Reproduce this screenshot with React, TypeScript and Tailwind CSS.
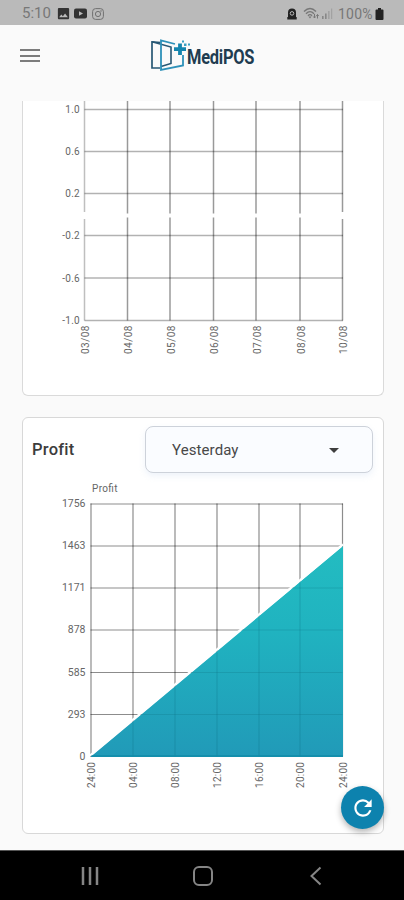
import React from 'react';
import { MdArrowDropDown, MdImage, MdRefresh } from 'react-icons/md';

const SALES_COLS = [
  { x: 62, label: '03/08' },
  { x: 105, label: '04/08' },
  { x: 147.5, label: '05/08' },
  { x: 191, label: '06/08' },
  { x: 233.5, label: '07/08' },
  { x: 277.5, label: '08/08' },
  { x: 320, label: '10/08' },
];

const SALES_ROWS = [
  { y: 8.5, label: '1.0' },
  { y: 50.5, label: '0.6' },
  { y: 92.5, label: '0.2' },
  { y: 134.5, label: '-0.2' },
  { y: 177, label: '-0.6' },
  { y: 219.5, label: '-1.0' },
];

const PROFIT_COLS = [
  { x: 68.5, label: '24:00' },
  { x: 110.5, label: '04:00' },
  { x: 152.5, label: '08:00' },
  { x: 194.5, label: '12:00' },
  { x: 236.5, label: '16:00' },
  { x: 277.5, label: '20:00' },
  { x: 320, label: '24:00' },
];

const PROFIT_ROWS = [
  { y: 24.5, label: '1756' },
  { y: 66.5, label: '1463' },
  { y: 108.5, label: '1171' },
  { y: 150.5, label: '878' },
  { y: 193, label: '585' },
  { y: 235, label: '293' },
  { y: 277, label: '0' },
];

export default function App() {
  return (
    <div className="relative flex h-[900px] w-[404px] flex-col overflow-hidden bg-[#fafafa] font-['Roboto',sans-serif]">
      <StatusBar />

      <header className="flex h-[76px] shrink-0 items-start pl-[20px] pt-[13px]">
        <button className="mt-[11px] flex w-[20px] flex-col gap-[3.5px]" aria-label="Menu">
          <span className="h-[2px] w-full bg-[#7c7c7c]" />
          <span className="h-[2px] w-full bg-[#7c7c7c]" />
          <span className="h-[2px] w-full bg-[#7c7c7c]" />
        </button>
        <Logo />
      </header>

      <main className="flex h-[749px] shrink-0 flex-col gap-[21px] overflow-hidden pl-[22px] pr-[20px]">
        <section className="h-[295px] shrink-0 rounded-b-[6px] border-x-[1.5px] border-b-[1.5px] border-[#dadada] bg-white">
          <SalesChart />
        </section>

        <section className="h-[417px] shrink-0 rounded-[6px] border-[1.5px] border-[#d8d8d8] bg-white">
          <div className="flex items-center justify-between pl-[9px] pr-[10px] pt-[8px]">
            <h2 className="pt-px text-[16.5px] font-medium tracking-[0.25px] text-[#3c3c3c]">Profit</h2>
            <button className="flex h-[47px] w-[228px] items-center justify-between rounded-[8px] border-[1.5px] border-[#cdd2da] bg-[#fafcff] pl-[26px] pr-[26px] text-[15px] text-[#484848] shadow-[0_3px_6px_rgba(200,215,240,0.3)]">
              <span className="pt-px tracking-[0.1px]">Yesterday</span>
              <MdArrowDropDown size={24} className="text-[#3e3e3e]" />
            </button>
          </div>
          <ProfitChart />
        </section>
      </main>

      <NavBar />

      <button
        className="absolute left-[341px] top-[786px] flex h-[43px] w-[43px] items-center justify-center rounded-full bg-[#0d82ae] text-white shadow-[0_3px_6px_rgba(0,0,0,0.3)]"
        aria-label="Refresh"
      >
        <MdRefresh size={26} />
      </button>
    </div>
  );
}

function StatusBar() {
  return (
    <div className="flex h-[25px] shrink-0 items-center justify-between bg-[#bababa] pl-[22px] pr-[20px] pt-[2px] text-[#777]">
      <div className="flex items-center">
        <span className="w-[34px] text-[15px] leading-none">5:10</span>
        <MdImage size={15} className="text-[#333]" />
        <svg width="13" height="11" viewBox="0 0 13 11" className="ml-[3px]">
          <rect width="13" height="10" y="0.5" rx="2" fill="#333" />
          <path d="M5 3.2v4.6l4-2.3z" fill="#bababa" />
        </svg>
        <svg width="12" height="12" viewBox="0 0 12 12" fill="none" stroke="#707070" className="ml-[5px]">
          <rect x="0.6" y="0.6" width="10.8" height="10.8" rx="3" />
          <circle cx="6" cy="6" r="2.6" />
          <circle cx="9" cy="3" r="0.3" />
        </svg>
      </div>
      <div className="flex items-center">
        <svg width="10" height="12" viewBox="0 0 10 12">
          <path d="M1 4.5a4 4 0 0 1 8 0V9h.7v2.5H.3V9H1z" fill="#222" />
          <circle cx="5" cy="5.4" r="1.8" fill="none" stroke="#bababa" />
        </svg>
        <svg width="17" height="13" viewBox="0 0 17 13" fill="none" stroke="#777" className="ml-[6px]">
          <path d="M1 4.5Q7 -1.5 13 4.5M3 6.7Q7 2.5 11 6.7M5 8.8Q7 6.5 9 8.8" strokeWidth="1.4" />
          <path d="M7 11.5l-1.5-2h3z" fill="#777" stroke="none" />
          <path d="M11.5 7v4M10.3 9.5l1.2 1.5 1.2-1.5M14.5 11.5v-4M13.3 9l1.2-1.5L15.7 9" strokeWidth="1" />
        </svg>
        <svg width="12" height="11" viewBox="0 0 12 11" className="ml-px">
          <path d="M1 8h1.6v3H1zM4 5.5h1.6V11H4z" fill="#888" />
          <path d="M7 3h1.6v8H7zM10 .5h1.2V11H10z" fill="#a2a2a2" />
        </svg>
        <span className="ml-[5px] w-[37px] pt-px text-[14px] leading-none tracking-[0.2px]">100%</span>
        <svg width="9" height="12" viewBox="0 0 9 12" fill="#222">
          <path d="M3 0h3v1.500h1.500q1 0 1 1V11q0 1-1 1h-6q-1 0-1-1V2.500q0-1 1-1H3z" />
        </svg>
      </div>
    </div>
  );
}

function Logo() {
  return (
    <svg width="110" height="35" viewBox="0 0 110 35" fill="none" className="-mt-px ml-[110px]">
      <path d="M10.500 5.500L2 4.800V31H10" stroke="#275774" strokeWidth="1.700" />
      <path d="M2 4.800L21 10V26.500L11 29.500" stroke="#275774" strokeWidth="1.600" />
      <path d="M25 7L11 3.500V33L33 28.500V18" stroke="#2e91b9" strokeWidth="1.800" />
      <path d="M30 6.500v11.500M24 12.200h12" stroke="#1485ae" strokeWidth="3.800" />
      <path d="M34 6.500h2.500V9H34zM32 3.500h2v2h-2zM38 6.500h2v2h-2z" fill="#3ba0c2" />
      <text
        transform="translate(37 27) scale(0.84375 1)"
        fontFamily="Roboto, sans-serif"
        fontSize="19.500"
        fontWeight="700"
        fill="#203c50"
        textLength="80"
        lengthAdjust="spacing"
      >
        MediPOS
      </text>
    </svg>
  );
}

function SalesChart() {
  return (
    <svg width="359" height="292" viewBox="0.5 0 359 292" className="block">
      <g stroke="#000" strokeOpacity="0.3" strokeWidth="1.5">
        {SALES_ROWS.map((row) => (
          <line key={row.label} x1="62" x2="320.500" y1={row.y} y2={row.y} />
        ))}
        {SALES_COLS.map((col, i) => {
          const edge = i === 0 || i === SALES_COLS.length - 1;
          return (
            <path
              key={col.label}
              d={`M${col.x} 0V${edge ? 111 : 112.5}M${col.x} ${edge ? 118 : 116.5}V219.5`}
              strokeOpacity={i === 0 ? 0.25 : 0.4}
            />
          );
        })}
      </g>
      <g fontFamily="Roboto, sans-serif" fontSize="10" fill="#666">
        {SALES_ROWS.map((row) => (
          <text key={row.label} x="57.500" y={row.y + 3.5} textAnchor="end" letterSpacing="0.3">
            {row.label}
          </text>
        ))}
        {SALES_COLS.map((col) => (
          <text
            key={col.label}
            transform={`translate(${col.x + 4.5} 253) rotate(-90)`}
            textLength="28.500"
          >
            {col.label}
          </text>
        ))}
      </g>
    </svg>
  );
}

function ProfitChart() {
  return (
    <svg width="359" height="335" viewBox="0.5 -6.5 359 335" className="block">
      <defs>
        <linearGradient id="profit-fill" x1="0" x2="0" y1="0" y2="1">
          <stop offset="0" stopColor="#23bcc1" />
          <stop offset="0.4" stopColor="#20b3c0" />
          <stop offset="1" stopColor="#219ab8" />
        </linearGradient>
      </defs>
      <g stroke="#000" strokeOpacity="0.45" strokeWidth="1.2">
        {PROFIT_ROWS.map((row) => (
          <line key={row.label} x1="68" x2="320.500" y1={row.y} y2={row.y} />
        ))}
        {PROFIT_COLS.map((col, i) => (
          <line key={i} x1={col.x} x2={col.x} y1="24" y2="277" />
        ))}
      </g>
      <path d="M68.500 277L320.500 66.500V277.500H68.500z" fill="url(#profit-fill)" />
      <path d="M67.500 276L320.500 64.800" stroke="#fff" strokeWidth="2.200" />
      <g stroke="#0b6f80" strokeOpacity="0.25" strokeWidth="1.2">
        <path d="M110.500 242.500V277M152.500 208V277M194.500 173V277M236.500 138V277M277.500 103V277" />
        <path d="M270 108.500H320M220 150.500H320M169.500 193H320M119.500 235H320" />
      </g>
      <path d="M69 276.500H320.500" stroke="#118ba8" strokeWidth="1.5" />
      <g fontFamily="Roboto, sans-serif" fontSize="10" fill="#666">
        <text x="69.500" y="12.500" textLength="25.500">Profit</text>
        {PROFIT_ROWS.map((row) => (
          <text
            key={row.label}
            x={63 - row.label.length * 5.9}
            y={row.y + 3.2}
            textLength={row.label.length * 5.9}
            lengthAdjust="spacingAndGlyphs"
          >
            {row.label}
          </text>
        ))}
        {PROFIT_COLS.map((col, i) => (
          <text key={i} transform={`translate(${col.x + 4} 308.5) rotate(-90)`} textLength="26">
            {col.label}
          </text>
        ))}
      </g>
    </svg>
  );
}

function NavBar() {
  return (
    <nav className="flex h-[50px] shrink-0 items-center justify-between border-t border-[#555] bg-black pl-[80px] pr-[82px]">
      <svg width="20" height="20" viewBox="0 0 20 20" stroke="#858585" strokeWidth="2.500">
        <path d="M3 1v18M10 1v18M17 1v18" />
      </svg>
      <svg width="20" height="20" viewBox="0 0 20 20" fill="none" stroke="#858585" strokeWidth="2" className="-ml-[3px]">
        <rect x="1" y="1" width="18" height="18" rx="5" />
      </svg>
      <svg width="13" height="20" viewBox="0 0 13 20" fill="none" stroke="#858585" strokeWidth="2">
        <path d="M11.500 1.500L2.500 10L11.500 18.500" />
      </svg>
    </nav>
  );
}
